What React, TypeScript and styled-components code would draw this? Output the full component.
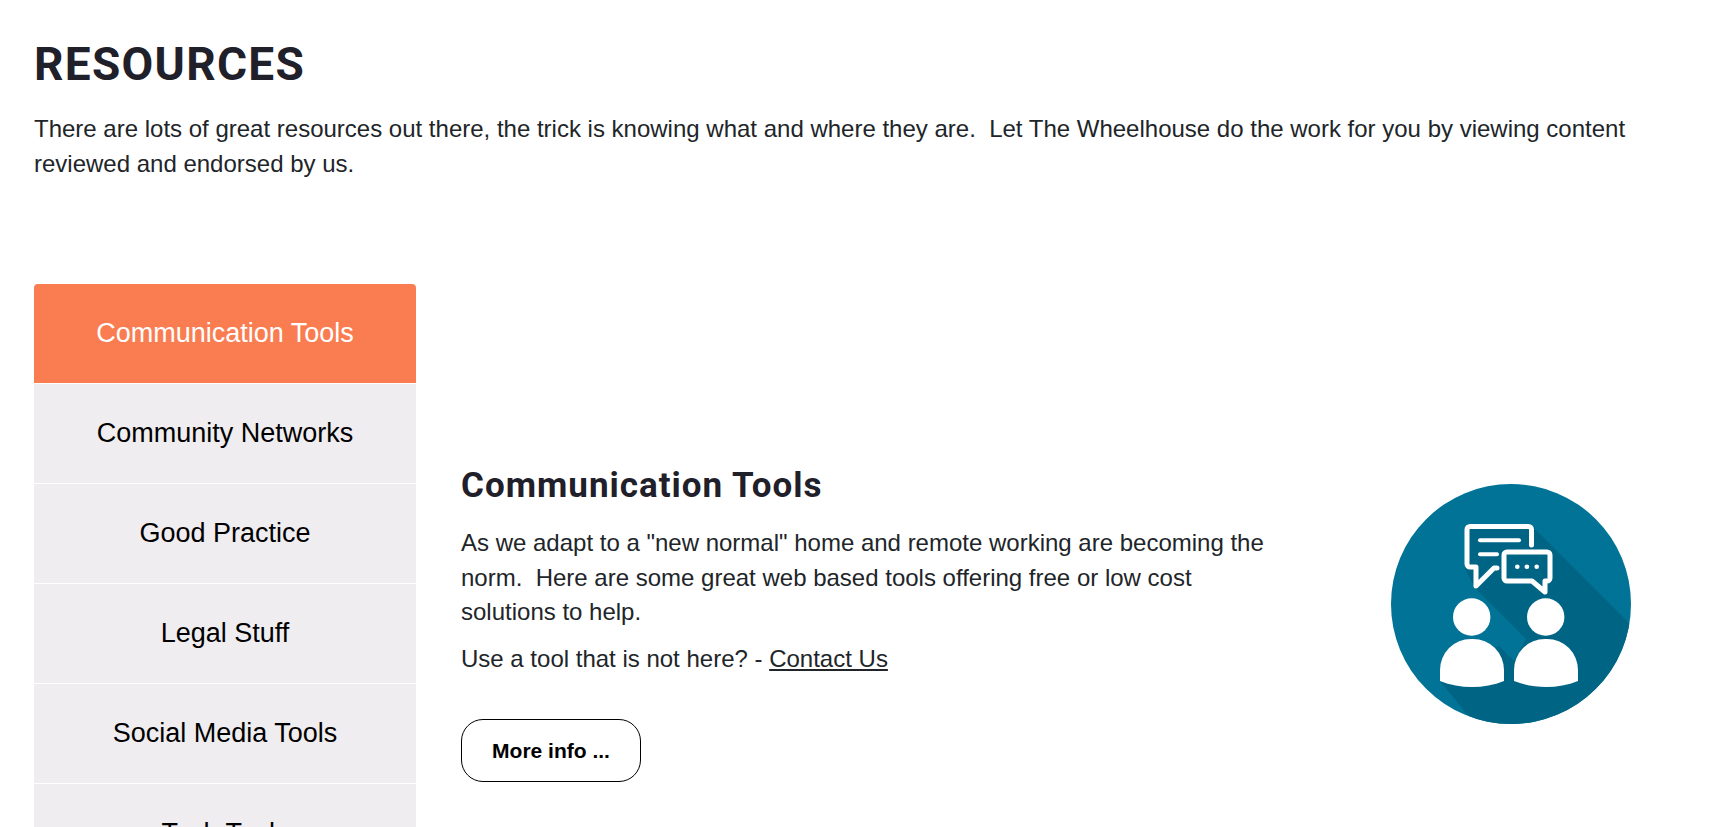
import React from 'react';
import styled, { createGlobalStyle } from 'styled-components';

const GlobalStyle = createGlobalStyle`
    html, body {
        margin: 0;
        padding: 0;
        height: 827px;
        overflow: hidden;
        background: #fff;
    }
    body {
        font-family: "Liberation Sans", Arial, sans-serif;
        color: #212529;
    }
`;

const Page = styled.div`
    padding: 32px 34px 0;
`;

const Title = styled.h1`
    margin: 0 0 15px;
    font-family: Roboto, sans-serif;
    font-size: 46px;
    font-weight: 700;
    line-height: 64px;
    letter-spacing: 1.3px;
    color: #1f2029;
`;

const Intro = styled.p`
    margin: 0 0 103px;
    font-size: 24px;
    line-height: 35px;
    max-width: 1640px;
`;

const Columns = styled.div`
    display: flex;
    align-items: flex-start;
`;

const TabList = styled.nav`
    flex: 0 0 382px;
    display: flex;
    flex-direction: column;
`;

const Tab = styled.a<{ $active?: boolean }>`
    height: 99px;
    margin-bottom: 1.1px;
    display: flex;
    align-items: center;
    justify-content: center;
    font-size: 27px;
    color: ${(p) => (p.$active ? '#fff' : '#000')};
    background: ${(p) => (p.$active ? '#fa7d52' : '#efedf0')};
    border-radius: ${(p) => (p.$active ? '4px 4px 0 0' : '0')};
`;

const Panel = styled.section`
    flex: 1;
    display: flex;
    align-items: flex-start;
    justify-content: space-between;
    padding: 178px 62px 0 45px;
`;

const PanelBody = styled.div`
    width: 820px;
`;

const PanelTitle = styled.h2`
    margin: 0 0 16px;
    font-family: Roboto, sans-serif;
    font-size: 35px;
    font-weight: 700;
    line-height: 48px;
    letter-spacing: 1px;
    color: #1f2029;
`;

const Text = styled.p`
    margin: 0 0 12px;
    font-size: 24px;
    line-height: 34.6px;
`;

const ContactLink = styled.a`
    color: #212529;
    text-decoration: underline;
`;

const MoreButton = styled.button`
    margin-top: 31px;
    width: 180px;
    height: 63px;
    background: #fff;
    border: 1px solid #000;
    border-radius: 22px;
    font-family: "Liberation Sans", Arial, sans-serif;
    font-size: 21px;
    font-weight: 700;
    color: #000;
`;

const IconWrap = styled.div`
    flex: 0 0 240px;
    margin-top: 22px;
`;

const ResourceIcon: React.FC = () => (
    <svg width="240" height="240" viewBox="0 0 240 240" aria-hidden="true">
        <defs>
            <clipPath id="disc">
                <circle cx="120" cy="120" r="120" />
            </clipPath>
        </defs>
        <circle cx="120" cy="120" r="120" fill="#007396" />
        <path
            clipPath="url(#disc)"
            d="M143 44 L240 141 V240 H84 L49 197 L108 162 L123 177 L135 155 L84 104 L74 85 V42 H143 Z"
            fill="#006584"
        />
        <g fill="#fff">
            <circle cx="80.7" cy="133" r="18.7" />
            <circle cx="154.7" cy="133" r="18.7" />
            <path d="M49 197 V186 a31 31 0 0 1 31 -31 h2 a31 31 0 0 1 31 31 V197 c-20 8 -44 8 -64 0 Z" />
            <path d="M123 197 V186 a31 31 0 0 1 31 -31 h2 a31 31 0 0 1 31 31 V197 c-20 8 -44 8 -64 0 Z" />
        </g>
        <g fill="none" stroke="#fff" strokeWidth="5" strokeLinejoin="round" strokeLinecap="round">
            <path d="M140.5 61 V45.5 a3 3 0 0 0 -3 -3 H79 a3 3 0 0 0 -3 3 V80 a3 3 0 0 0 3 3 H85 V102 L103 84 H106" />
            <path d="M116 68 H156 a3 3 0 0 1 3 3 V94 a3 3 0 0 1 -3 3 H154 V108 L141 97 H116 a3 3 0 0 1 -3 -3 V71 a3 3 0 0 1 3 -3 Z" />
            <path d="M89 56.3 H128" strokeWidth="4" />
            <path d="M89 70.3 H106" strokeWidth="4" />
        </g>
        <g fill="#fff">
            <circle cx="126.3" cy="82.7" r="2.3" />
            <circle cx="135.9" cy="82.7" r="2.3" />
            <circle cx="145.7" cy="82.7" r="2.3" />
        </g>
    </svg>
);

const tabs = ['Communication Tools', 'Community Networks', 'Good Practice', 'Legal Stuff', 'Social Media Tools', 'Tech Tools'];

const App: React.FC = () => {
    return (
        <Page>
            <GlobalStyle />
            <Title>RESOURCES</Title>
            <Intro>
                There are lots of great resources out there, the trick is knowing what and where they are.&nbsp; Let The
                Wheelhouse do the work for you by viewing content reviewed and endorsed by us.
            </Intro>
            <Columns>
                <TabList>
                    {tabs.map((tab, i) => (
                        <Tab key={tab} $active={i === 0}>
                            {tab}
                        </Tab>
                    ))}
                </TabList>
                <Panel>
                    <PanelBody>
                        <PanelTitle>Communication Tools</PanelTitle>
                        <Text>
                            As we adapt to a "new normal" home and remote working are becoming the norm.&nbsp; Here are
                            some great web based tools offering free or low cost solutions to help.
                        </Text>
                        <Text>
                            Use a tool that is not here? - <ContactLink href="#">Contact Us</ContactLink>
                        </Text>
                        <MoreButton type="button">More info ...</MoreButton>
                    </PanelBody>
                    <IconWrap>
                        <ResourceIcon />
                    </IconWrap>
                </Panel>
            </Columns>
        </Page>
    );
};

export default App;
